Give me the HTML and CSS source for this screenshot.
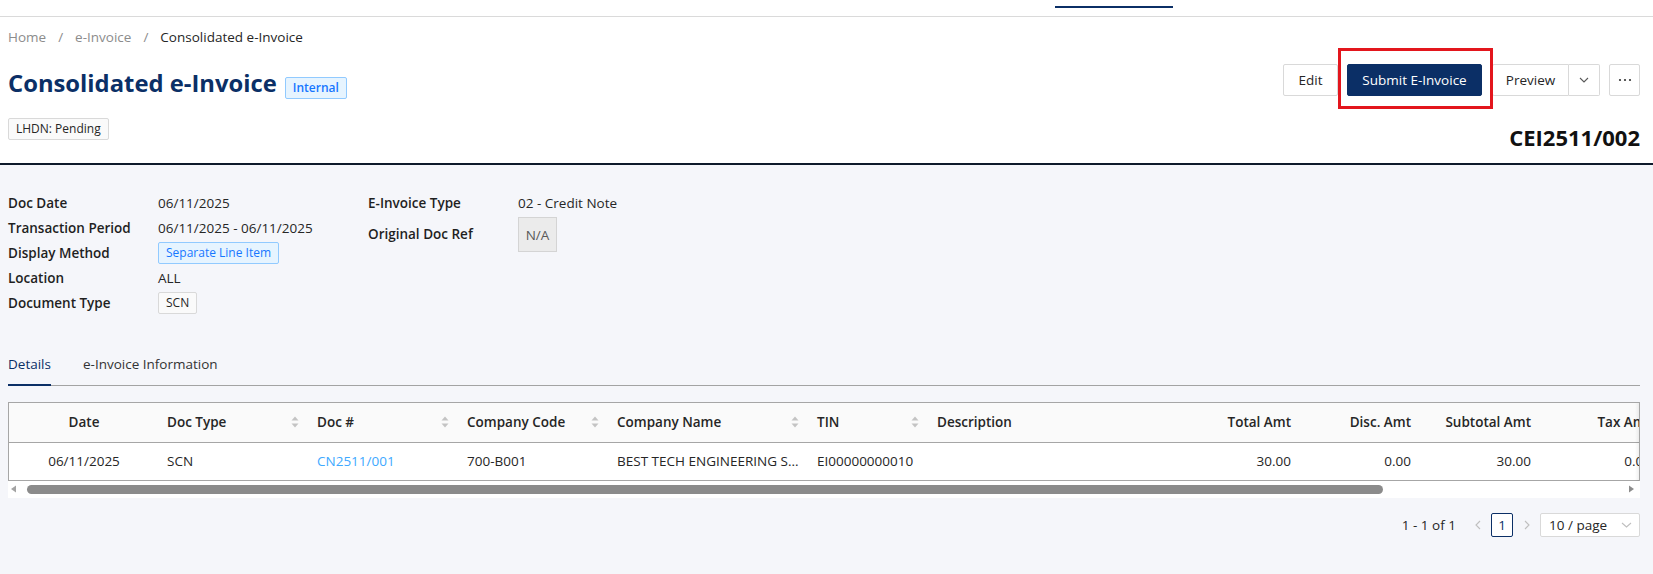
FILE: index.html
```html
<!DOCTYPE html>
<html lang="en">
<head>
    <meta charset="UTF-8">
    <meta name="viewport" content="width=device-width, initial-scale=1.0">
    <title>Consolidated e-Invoice</title>
    <link rel="stylesheet" href="styles.css">
</head>
<body>
    <div class="topnav"><span class="topnav-tab"></span></div>

    <header class="page-head">
        <nav class="crumbs">
            <span>Home</span><span class="sep">/</span>
            <span>e-Invoice</span><span class="sep">/</span>
            <span class="current">Consolidated e-Invoice</span>
        </nav>

        <div class="title-row">
            <div class="title">
                <h1>Consolidated e-Invoice</h1>
                <span class="tag tag-blue tag-strong">Internal</span>
            </div>
            <div class="actions">
                <button class="btn btn-edit">Edit</button>
                <span class="highlight"><button class="btn btn-primary">Submit E-Invoice</button></span>
                <div class="btn-group">
                    <button class="btn btn-preview">Preview</button>
                    <button class="btn btn-icon">
                        <svg width="10" height="6" viewBox="0 0 10 6"><polyline points="1,1 5,5 9,1" fill="none" stroke="#595959" stroke-width="1.1"/></svg>
                    </button>
                </div>
                <button class="btn btn-icon btn-more">
                    <svg width="14" height="4" viewBox="0 0 14 4"><circle cx="2" cy="2" r="1.1" fill="#333"/><circle cx="7" cy="2" r="1.1" fill="#333"/><circle cx="12" cy="2" r="1.1" fill="#333"/></svg>
                </button>
            </div>
        </div>

        <div class="status-row">
            <span class="tag">LHDN: Pending</span>
            <span class="doc-no">CEI2511/002</span>
        </div>
    </header>

    <section class="info">
        <dl class="info-list info-main">
            <dt>Doc Date</dt><dd>06/11/2025</dd>
            <dt>Transaction Period</dt><dd>06/11/2025 - 06/11/2025</dd>
            <dt>Display Method</dt><dd><span class="tag tag-blue">Separate Line Item</span></dd>
            <dt>Location</dt><dd>ALL</dd>
            <dt>Document Type</dt><dd><span class="tag">SCN</span></dd>
        </dl>
        <dl class="info-list">
            <dt>E-Invoice Type</dt><dd>02 - Credit Note</dd>
            <dt>Original Doc Ref</dt><dd class="ref-cell"><span class="ref-box">N/A</span></dd>
        </dl>
    </section>

    <div class="tabs">
        <span class="tab active">Details</span>
        <span class="tab">e-Invoice Information</span>
    </div>

    <div class="table-wrap">
        <table class="grid">
            <colgroup>
                <col style="width:150px"><col style="width:150px"><col style="width:150px"><col style="width:150px">
                <col style="width:200px"><col style="width:120px"><col style="width:250px">
                <col style="width:120px"><col style="width:120px"><col style="width:120px"><col style="width:120px">
            </colgroup>
            <thead>
                <tr>
                    <th class="center">Date</th>
                    <th><div class="th-sort"><span>Doc Type</span><svg class="sorter" width="8" height="12" viewBox="0 0 8 12"><path d="M4 0.5 L7.5 4.5 H0.5 Z M4 11.5 L7.5 7.5 H0.5 Z" fill="#c4c4c4"/></svg></div></th>
                    <th><div class="th-sort"><span>Doc #</span><svg class="sorter" width="8" height="12" viewBox="0 0 8 12"><path d="M4 0.5 L7.5 4.5 H0.5 Z M4 11.5 L7.5 7.5 H0.5 Z" fill="#c4c4c4"/></svg></div></th>
                    <th><div class="th-sort"><span>Company Code</span><svg class="sorter" width="8" height="12" viewBox="0 0 8 12"><path d="M4 0.5 L7.5 4.5 H0.5 Z M4 11.5 L7.5 7.5 H0.5 Z" fill="#c4c4c4"/></svg></div></th>
                    <th><div class="th-sort"><span>Company Name</span><svg class="sorter" width="8" height="12" viewBox="0 0 8 12"><path d="M4 0.5 L7.5 4.5 H0.5 Z M4 11.5 L7.5 7.5 H0.5 Z" fill="#c4c4c4"/></svg></div></th>
                    <th><div class="th-sort"><span>TIN</span><svg class="sorter" width="8" height="12" viewBox="0 0 8 12"><path d="M4 0.5 L7.5 4.5 H0.5 Z M4 11.5 L7.5 7.5 H0.5 Z" fill="#c4c4c4"/></svg></div></th>
                    <th>Description</th>
                    <th class="num">Total Amt</th>
                    <th class="num">Disc. Amt</th>
                    <th class="num">Subtotal Amt</th>
                    <th class="num">Tax Amt</th>
                </tr>
            </thead>
            <tbody>
                <tr>
                    <td class="center">06/11/2025</td>
                    <td>SCN</td>
                    <td><a class="link" href="#">CN2511/001</a></td>
                    <td>700-B001</td>
                    <td>BEST TECH ENGINEERING S...</td>
                    <td>EI00000000010</td>
                    <td></td>
                    <td class="num">30.00</td>
                    <td class="num">0.00</td>
                    <td class="num">30.00</td>
                    <td class="num">0.00</td>
                </tr>
            </tbody>
        </table>
    </div>
    <div class="hscroll">
        <svg class="hs-arrow" width="10" height="8" viewBox="0 0 10 8"><path d="M3 4 L8 0.5 V7.5 Z" fill="#a3a3a3"/></svg>
        <span class="hs-thumb"></span>
        <svg class="hs-arrow hs-right" width="10" height="8" viewBox="0 0 10 8"><path d="M7 4 L2 0.5 V7.5 Z" fill="#8c8c8c"/></svg>
    </div>

    <div class="pager">
        <span class="pager-total">1 - 1 of 1</span>
        <span class="pager-arrow prev">
            <svg width="6" height="10" viewBox="0 0 6 10"><polyline points="5,1 1,5 5,9" fill="none" stroke="#bfbfbf" stroke-width="1.1"/></svg>
        </span>
        <span class="pager-page">1</span>
        <span class="pager-arrow next">
            <svg width="6" height="10" viewBox="0 0 6 10"><polyline points="1,1 5,5 1,9" fill="none" stroke="#bfbfbf" stroke-width="1.1"/></svg>
        </span>
        <span class="pager-size">
            10 / page
            <svg width="11" height="6" viewBox="0 0 11 6"><polyline points="1,1 5.5,5 10,1" fill="none" stroke="#bfbfbf" stroke-width="1.1"/></svg>
        </span>
    </div>
</body>
</html>
```

FILE: styles.css
```css
* {
    box-sizing: border-box;
    margin: 0;
    padding: 0;
}
body {
    font-family: 'Open Sans', 'Noto Sans', Arial, sans-serif;
    font-size: 13.5px;
    color: #262626;
    background-color: #f5f6fa;
}

/* top navigation strip */
.topnav {
    height: 17px;
    background-color: #fff;
    border-bottom: 1px solid #dadada;
}
.topnav-tab {
    display: block;
    width: 118px;
    height: 8px;
    margin-left: 1055px;
    border-bottom: 2px solid #0b2f66;
}

/* page header */
.page-head {
    background-color: #fff;
    padding: 10px 13px 12px 8px;
    border-bottom: 2px solid #0e1a2b;
}
.crumbs {
    display: flex;
    line-height: 20px;
    color: #8c8c8c;
}
.crumbs .sep {
    margin: 0 12px;
}
.crumbs .current {
    color: #262626;
}
.title-row {
    display: flex;
    justify-content: space-between;
    align-items: flex-start;
    margin-top: 17px;
}
.title {
    display: flex;
    align-items: baseline;
    gap: 8px;
    margin-top: 3px;
}
h1 {
    font-size: 23.8px;
    line-height: 32px;
    font-weight: 700;
    color: #0b2f66;
}
.tag {
    display: inline-block;
    height: 22px;
    line-height: 20px;
    padding: 0 7px;
    font-size: 12px;
    color: #262626;
    background-color: #fafafa;
    border: 1px solid #d9d9d9;
    border-radius: 2px;
    white-space: nowrap;
}
.tag-blue {
    color: #1677ff;
    background-color: #e6f4ff;
    border-color: #91caff;
}
.tag-strong {
    font-weight: 600;
}

.actions {
    display: flex;
    align-items: center;
}
.btn {
    display: inline-flex;
    align-items: center;
    justify-content: center;
    height: 32px;
    padding: 0 15px;
    font: inherit;
    color: #262626;
    white-space: nowrap;
    background-color: #fff;
    border: 1px solid #d9d9d9;
    border-radius: 2px;
    cursor: pointer;
}
.btn-edit {
    width: 55px;
}
.btn-primary {
    width: 135px;
    padding: 0;
    color: #fff;
    background-color: #0b2f66;
    border-color: #0b2f66;
}
.highlight {
    position: relative;
    display: inline-flex;
    margin: 0 10px 0 9px;
}
.highlight::after {
    content: '';
    position: absolute;
    left: -9px;
    right: -11px;
    top: -16px;
    bottom: -13px;
    border: 3px solid #e3161d;
    pointer-events: none;
}
.btn-group {
    display: flex;
}
.btn-preview {
    width: 77px;
    padding: 0 10px;
    border-radius: 2px 0 0 2px;
}
.btn-icon {
    width: 31px;
    padding: 0;
}
.btn-group .btn-icon {
    border-left: none;
    border-radius: 0 2px 2px 0;
}
.btn-more {
    margin-left: 9px;
}
.status-row {
    display: flex;
    justify-content: space-between;
    align-items: flex-start;
    margin-top: 19px;
}
.doc-no {
    margin-top: 5px;
    font-size: 22px;
    line-height: 28px;
    font-weight: 700;
    color: #111;
}

/* document info */
.info {
    display: flex;
    padding: 25px 13px 0 8px;
}
.info-list {
    display: grid;
    grid-template-columns: 150px auto;
    grid-auto-rows: minmax(25px, auto);
    align-items: center;
    align-content: start;
}
.info-main {
    width: 360px;
}
.info-list dt {
    font-weight: 600;
    color: #1f1f1f;
}
.ref-cell {
    padding: 2px 0 1px;
}
.ref-box {
    display: inline-flex;
    align-items: center;
    justify-content: center;
    width: 39px;
    height: 35px;
    color: #595959;
    background-color: #ebebeb;
    border: 1px solid #d4d4d4;
}

/* tabs */
.tabs {
    display: flex;
    gap: 32px;
    margin: 26px 13px 0 8px;
    border-bottom: 1px solid #a3a3a3;
}
.tab {
    padding: 13px 0 10px;
    line-height: 20px;
    color: #333;
    border-bottom: 2px solid transparent;
    margin-bottom: -1px;
}
.tab.active {
    color: #0b2f66;
    border-bottom-color: #0b2f66;
}

/* table */
.table-wrap {
    margin: 16px 13px 0 8px;
    background-color: #fff;
    border: 1px solid #a6a6a6;
    border-bottom: none;
    overflow: hidden;
    position: relative;
}
.table-wrap::after {
    content: '';
    position: absolute;
    top: 0;
    right: 0;
    bottom: 0;
    width: 4px;
    background: linear-gradient(to right, rgba(0,0,0,0), rgba(0,0,0,0.06));
}
.grid {
    border-collapse: collapse;
    table-layout: fixed;
    width: 1650px;
}
.grid th,
.grid td {
    height: 38px;
    padding: 0 8px;
    text-align: left;
    white-space: nowrap;
    overflow: hidden;
    border-bottom: 1px solid #a6a6a6;
}
.grid th {
    height: 39px;
    font-weight: 600;
    background-color: #fafafa;
}
.grid .center {
    text-align: center;
}
.grid .num {
    text-align: right;
}
.th-sort {
    display: flex;
    justify-content: space-between;
    align-items: center;
    padding-right: 2px;
}
.link {
    color: #40a9ff;
    text-decoration: none;
}

/* fake horizontal scrollbar */
.hscroll {
    display: flex;
    align-items: center;
    height: 17px;
    margin: 0 13px 0 8px;
    padding-right: 3px;
    background-color: #fff;
}
.hs-thumb {
    width: 1356px;
    height: 9px;
    margin-left: 9px;
    background-color: #8b8b8b;
    border-radius: 5px;
}
.hs-right {
    margin-left: auto;
}

/* pagination */
.pager {
    display: flex;
    justify-content: flex-end;
    align-items: center;
    margin: 15px 13px 0 8px;
    height: 24px;
}
.pager-arrow {
    display: inline-flex;
    justify-content: center;
    width: 14px;
}
.pager-arrow.prev {
    margin-left: 15px;
}
.pager-page {
    display: inline-flex;
    align-items: center;
    justify-content: center;
    width: 22px;
    height: 24px;
    margin-left: 6px;
    color: #0b2f66;
    background-color: #fff;
    border: 1px solid #0b2f66;
    border-radius: 2px;
}
.pager-arrow.next {
    margin-left: 7px;
}
.pager-size {
    display: inline-flex;
    align-items: center;
    justify-content: space-between;
    width: 100px;
    height: 24px;
    margin-left: 6px;
    padding: 0 7px 0 8px;
    background-color: #fff;
    border: 1px solid #d9d9d9;
    border-radius: 2px;
}
```
